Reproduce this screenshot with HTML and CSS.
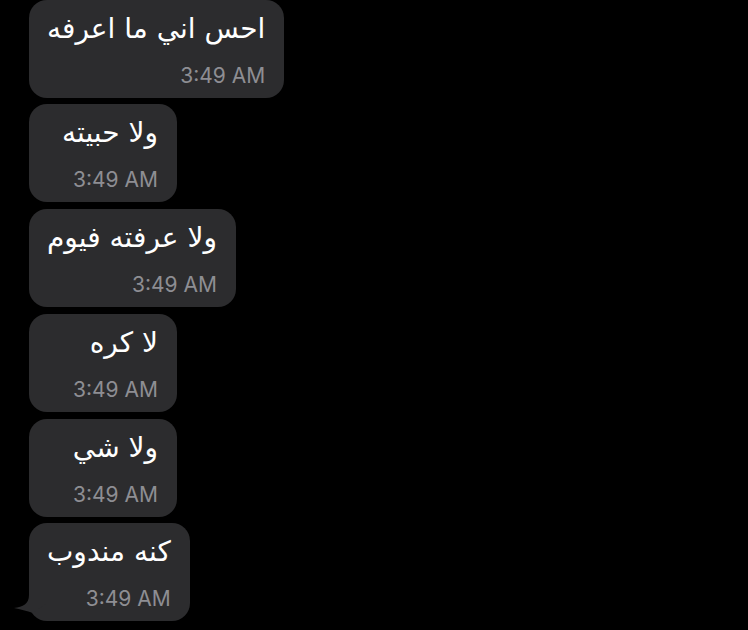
FILE: index.html
```html
<!DOCTYPE html>
<html lang="ar">
<head>
    <meta charset="UTF-8">
    <meta name="viewport" content="width=device-width, initial-scale=1.0">
    <title>Messages</title>
    <link rel="stylesheet" href="styles.css">
</head>
<body>

    <!-- Message Thread -->
    <div class="thread">
        <div class="bubble">
            <p class="text" dir="rtl">احس اني ما اعرفه</p>
            <span class="time">3:49 AM</span>
        </div>
        <div class="bubble">
            <p class="text" dir="rtl">ولا حبيته</p>
            <span class="time">3:49 AM</span>
        </div>
        <div class="bubble">
            <p class="text" dir="rtl">ولا عرفته فيوم</p>
            <span class="time">3:49 AM</span>
        </div>
        <div class="bubble">
            <p class="text" dir="rtl">لا كره</p>
            <span class="time">3:49 AM</span>
        </div>
        <div class="bubble">
            <p class="text" dir="rtl">ولا شي</p>
            <span class="time">3:49 AM</span>
        </div>
        <div class="bubble">
            <p class="text" dir="rtl">كنه مندوب</p>
            <span class="time">3:49 AM</span>
            <!-- Bubble Tail -->
            <svg class="tail" width="35" height="30" viewBox="0 0 35 30">
                <path d="M15 4 C15 13 9 16 0 17 C6 18 13 20 19 22 L33 12 L33 4 Z" fill="#2c2c2e"/>
            </svg>
        </div>
    </div>

</body>
</html>
```

FILE: styles.css
```css
/* General Body Styling */
body {
    margin: 0;
    background-color: #000;
    height: 630px;
    overflow: hidden;
}

/* Thread */
.thread {
    display: flex;
    flex-direction: column;
    align-items: flex-start;
    gap: 6.75px;
    padding-left: 29px;
    margin-top: -0.5px;
}

/* Message Bubble */
.bubble {
    position: relative;
    box-sizing: border-box;
    display: flex;
    flex-direction: column;
    justify-content: space-between;
    align-items: flex-end;
    min-width: 148px;
    height: 98px;
    padding: 11px 19px 12px 18px;
    background-color: #2c2c2e;
    border-radius: 18px;
}

.text {
    margin: 0;
    font-family: 'DejaVu Sans', sans-serif;
    font-size: 28px;
    line-height: 36px;
    color: #fff;
}

.time {
    font-family: 'Inter', 'Liberation Sans', sans-serif;
    font-size: 21px;
    line-height: 21px;
    color: #8e8e93;
}

/* Tail on last bubble */
.tail {
    position: absolute;
    left: -15px;
    bottom: 0;
}
```
